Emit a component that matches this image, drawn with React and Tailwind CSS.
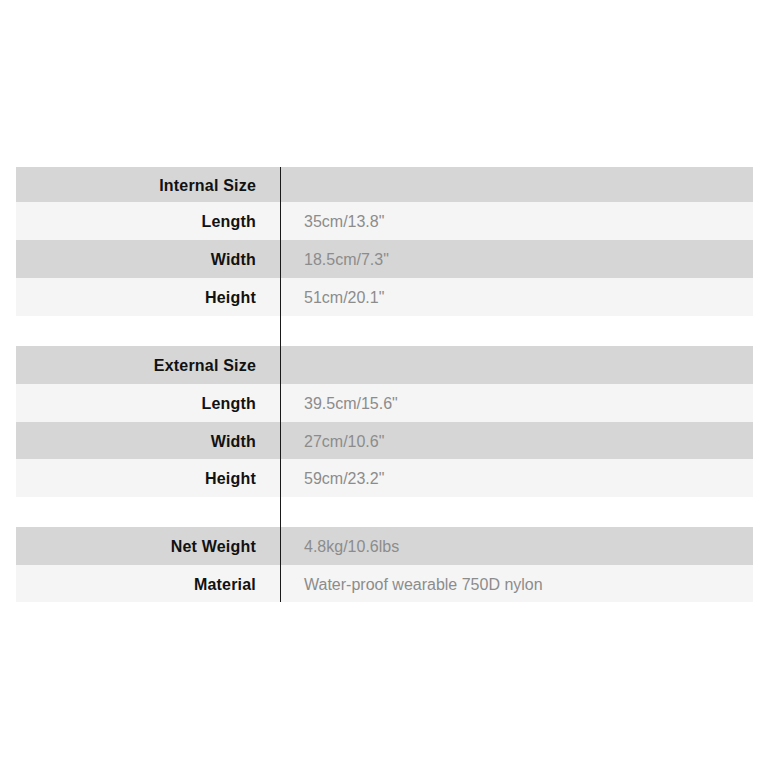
import React from "react";

const GRAY = "bg-[#d6d6d6]";
const LIGHT = "bg-[#f5f5f5]";

function Row({ label, value, bg, h }) {
  return (
    <div className={`flex ${bg} ${h}`}>
      <div className="w-[265px] shrink-0 border-r border-[#1a1a1a] flex items-center justify-end pr-[24px] pt-[2px] text-[16px] font-bold text-[#111] tracking-[0.2px]">
        {label}
      </div>
      <div className="flex-1 flex items-center pl-[23px] pt-[2px] text-[16px] text-[#8c8c8c]">
        {value}
      </div>
    </div>
  );
}

function Gap() {
  return (
    <div className="flex h-[30px] bg-white">
      <div className="w-[265px] shrink-0 border-r border-[#1a1a1a]" />
      <div className="flex-1" />
    </div>
  );
}

export default function App() {
  return (
    <div className="w-[769px] h-[769px] bg-white pt-[167px] px-[16px] font-['Liberation_Sans',Arial,sans-serif]">
      <div className="flex flex-col">
        <Row label="Internal Size" value="" bg={GRAY} h="h-[35px]" />
        <Row label="Length" value={"35cm/13.8\""} bg={LIGHT} h="h-[38px]" />
        <Row label="Width" value={"18.5cm/7.3\""} bg={GRAY} h="h-[38px]" />
        <Row label="Height" value={"51cm/20.1\""} bg={LIGHT} h="h-[38px]" />
        <Gap />
        <Row label="External Size" value="" bg={GRAY} h="h-[38px]" />
        <Row label="Length" value={"39.5cm/15.6\""} bg={LIGHT} h="h-[38px]" />
        <Row label="Width" value={"27cm/10.6\""} bg={GRAY} h="h-[37px]" />
        <Row label="Height" value={"59cm/23.2\""} bg={LIGHT} h="h-[38px]" />
        <Gap />
        <Row label="Net Weight" value="4.8kg/10.6lbs" bg={GRAY} h="h-[38px]" />
        <Row label="Material" value="Water-proof wearable 750D nylon" bg={LIGHT} h="h-[37px]" />
      </div>
    </div>
  );
}
